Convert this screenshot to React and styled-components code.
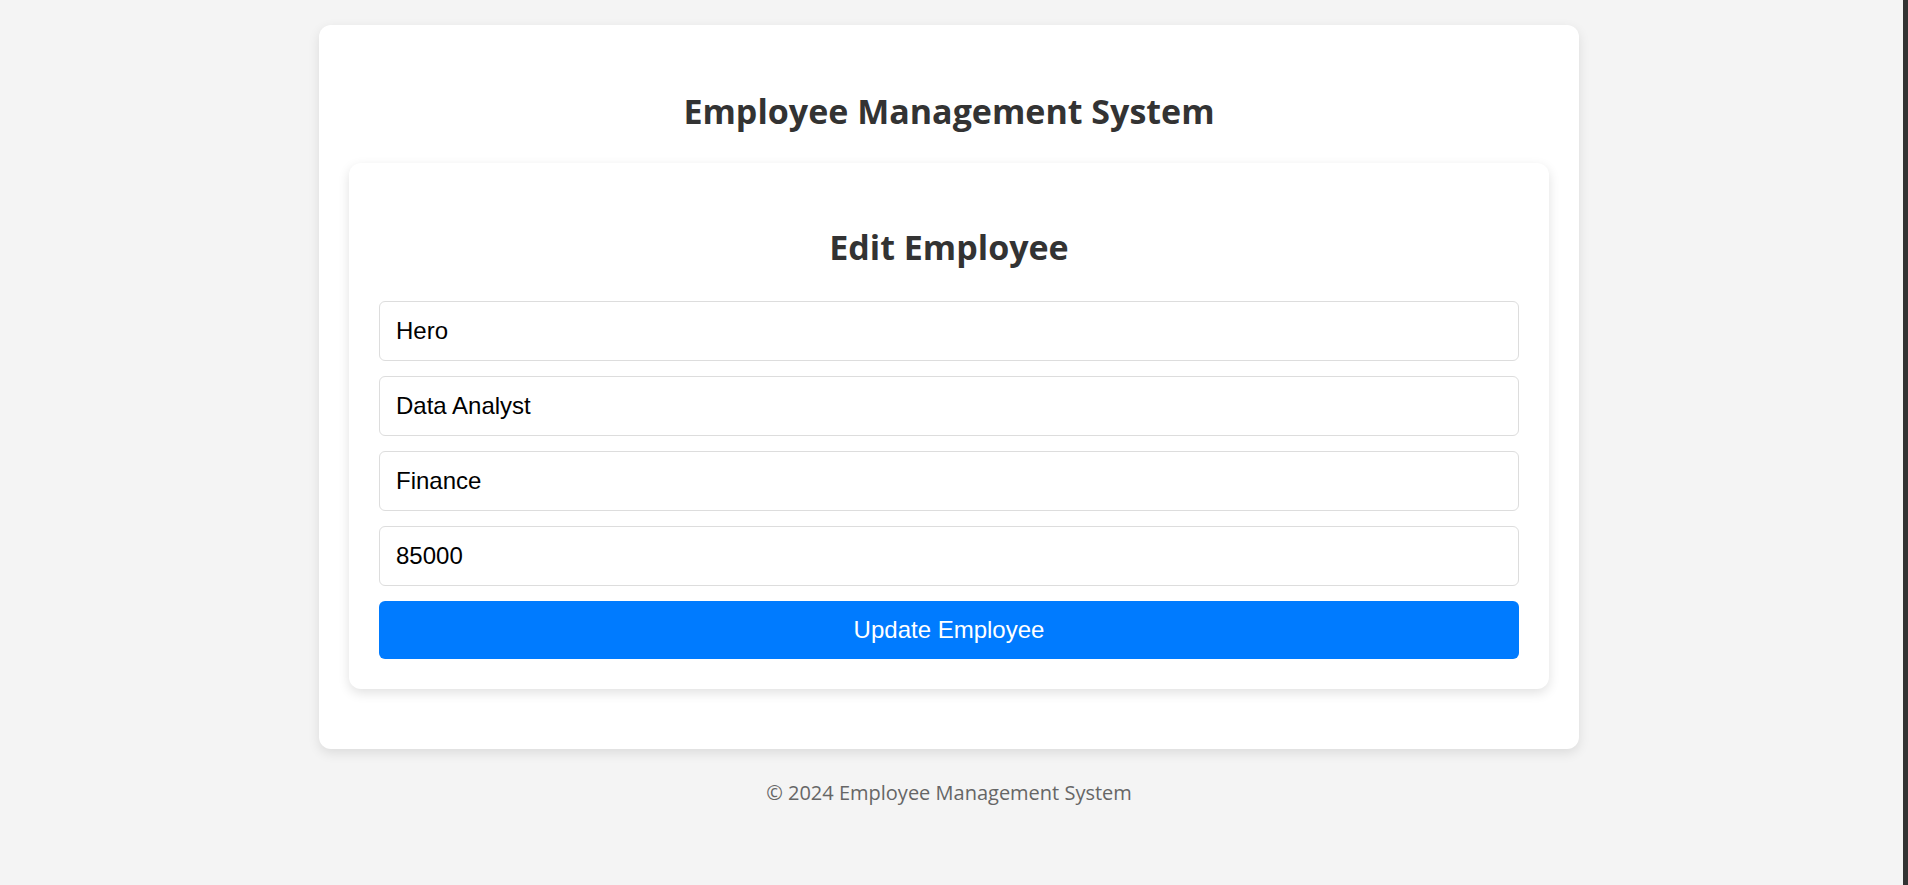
import React, { useState } from "react";
import styled, { createGlobalStyle } from "styled-components";

const GlobalStyle = createGlobalStyle`
  html, body {
    margin: 0;
    padding: 0;
  }

  body {
    background: #f4f4f4;
    font-family: "Open Sans", "Noto Sans", sans-serif;
    color: #333;
    min-height: 100vh;
    border-right: 5px solid #333;
    box-sizing: border-box;
  }
`;

const Page = styled.div`
  display: flex;
  flex-direction: column;
  align-items: center;
  padding: 25px 5px 0 0;
`;

const Shell = styled.div`
  width: 1260px;
  box-sizing: border-box;
  padding: 30px;
  background: #fff;
  border-radius: 12px;
  box-shadow: 0 4px 12px rgba(0, 0, 0, 0.1);
`;

const AppTitle = styled.h1`
  margin: 30px 0 26px 0;
  text-align: center;
  font-size: 34px;
  line-height: 52px;
  font-weight: 700;
  color: #333;
`;

const FormCard = styled.div`
  background: #fff;
  border-radius: 12px;
  padding: 30px;
  margin-bottom: 30px;
  box-shadow: 0 4px 12px rgba(0, 0, 0, 0.12);
`;

const FormTitle = styled.h2`
  margin: 30px 0;
  text-align: center;
  font-size: 34px;
  line-height: 48px;
  font-weight: 700;
  color: #333;
`;

const Form = styled.form`
  display: flex;
  flex-direction: column;
  gap: 15px;
`;

const Field = styled.input`
  height: 60px;
  box-sizing: border-box;
  padding: 0 16px;
  border: 1px solid #ddd;
  border-radius: 6px;
  font-family: "Liberation Sans", Arial, sans-serif;
  font-size: 24px;
  color: #000;
  background: #fff;
  outline: none;
`;

const SubmitButton = styled.button`
  height: 58px;
  border: none;
  border-radius: 6px;
  background: #007bff;
  color: #fff;
  font-family: "Liberation Sans", Arial, sans-serif;
  font-size: 24px;
  cursor: pointer;
`;

const Footer = styled.footer`
  padding: 30px 0;
  text-align: center;
  font-size: 20px;
  line-height: 28px;
  color: #666;
`;

const App = () => {
  const [employee, setEmployee] = useState({
    name: "Hero",
    position: "Data Analyst",
    department: "Finance",
    salary: "85000",
  });

  const update = (key) => (e) => setEmployee({ ...employee, [key]: e.target.value });

  return (
    <>
      <GlobalStyle />
      <Page>
        <Shell>
          <AppTitle>Employee Management System</AppTitle>
          <FormCard>
            <FormTitle>Edit Employee</FormTitle>
            <Form onSubmit={(e) => e.preventDefault()}>
              <Field value={employee.name} onChange={update("name")} />
              <Field value={employee.position} onChange={update("position")} />
              <Field value={employee.department} onChange={update("department")} />
              <Field value={employee.salary} onChange={update("salary")} />
              <SubmitButton type="submit">Update Employee</SubmitButton>
            </Form>
          </FormCard>
        </Shell>
        <Footer>© 2024 Employee Management System</Footer>
      </Page>
    </>
  );
};

export default App;
